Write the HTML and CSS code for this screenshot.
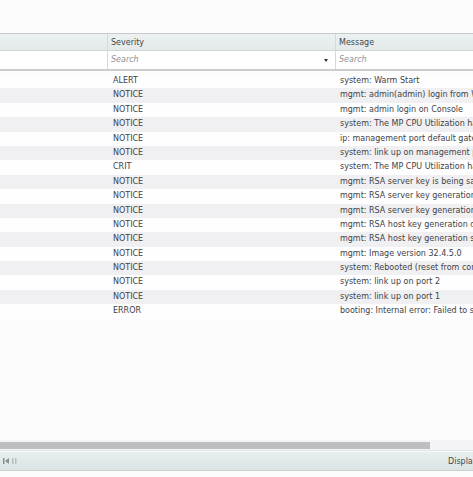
FILE: index.html
```html
<!DOCTYPE html>
<html>
<head>
<meta charset="utf-8">
<link rel="stylesheet" href="styles.css">
</head>
<body>
<div class="page">
  <div class="top"></div>
  <div class="grid">
    <div class="hdr">
      <div class="c c1"></div>
      <div class="c c2">Severity</div>
      <div class="c c3">Message</div>
    </div>
    <div class="flt">
      <div class="c c1"></div>
      <div class="c c2"><span class="ph">Search</span><span class="arrow"></span></div>
      <div class="c c3"><span class="ph">Search</span></div>
    </div>
    <div class="rows">
      <div class="row"><div class="c c1"></div><div class="c c2">ALERT</div><div class="c c3">system: Warm Start</div></div>
      <div class="row"><div class="c c1"></div><div class="c c2">NOTICE</div><div class="c c3">mgmt: admin(admin) login from Web</div></div>
      <div class="row"><div class="c c1"></div><div class="c c2">NOTICE</div><div class="c c3">mgmt: admin login on Console</div></div>
      <div class="row"><div class="c c1"></div><div class="c c2">NOTICE</div><div class="c c3">system: The MP CPU Utilization has</div></div>
      <div class="row"><div class="c c1"></div><div class="c c2">NOTICE</div><div class="c c3">ip: management port default gateway</div></div>
      <div class="row"><div class="c c1"></div><div class="c c2">NOTICE</div><div class="c c3">system: link up on management port</div></div>
      <div class="row"><div class="c c1"></div><div class="c c2">CRIT</div><div class="c c3">system: The MP CPU Utilization has</div></div>
      <div class="row"><div class="c c1"></div><div class="c c2">NOTICE</div><div class="c c3">mgmt: RSA server key is being saved</div></div>
      <div class="row"><div class="c c1"></div><div class="c c2">NOTICE</div><div class="c c3">mgmt: RSA server key generation</div></div>
      <div class="row"><div class="c c1"></div><div class="c c2">NOTICE</div><div class="c c3">mgmt: RSA server key generation</div></div>
      <div class="row"><div class="c c1"></div><div class="c c2">NOTICE</div><div class="c c3">mgmt: RSA host key generation done</div></div>
      <div class="row"><div class="c c1"></div><div class="c c2">NOTICE</div><div class="c c3">mgmt: RSA host key generation started</div></div>
      <div class="row"><div class="c c1"></div><div class="c c2">NOTICE</div><div class="c c3">mgmt: Image version 32.4.5.0</div></div>
      <div class="row"><div class="c c1"></div><div class="c c2">NOTICE</div><div class="c c3">system: Rebooted (reset from console)</div></div>
      <div class="row"><div class="c c1"></div><div class="c c2">NOTICE</div><div class="c c3">system: link up on port 2</div></div>
      <div class="row"><div class="c c1"></div><div class="c c2">NOTICE</div><div class="c c3">system: link up on port 1</div></div>
      <div class="row"><div class="c c1"></div><div class="c c2">ERROR</div><div class="c c3">booting: Internal error: Failed to start</div></div>
    </div>
  </div>
  <div class="scroll"><div class="thumb"></div></div>
  <div class="footer">
    <div class="pager">
      <svg width="16" height="10" viewBox="0 0 16 10"><rect x="1" y="2" width="1.5" height="6" fill="#8a8f94"/><path d="M3 5 L7 2 L7 8 Z" fill="#8a8f94"/><rect x="10" y="2" width="1.5" height="6" fill="#b9bec2"/><rect x="13" y="2" width="1.5" height="6" fill="#b9bec2"/></svg>
    </div>
    <div class="disp">Displaying 1 - 17 of 17</div>
  </div>
</div>
</body>
</html>
```
FILE: styles.css
```css
html, body {
  margin: 0;
  padding: 0;
}
body {
  background: #fdfcfd;
  font-family: "DejaVu Sans", Verdana, sans-serif;
  font-size: 8px;
  color: #3f4248;
  overflow: hidden;
}
.page {
  width: 473px;
  height: 477px;
  display: flex;
  flex-direction: column;
  overflow: hidden;
}
.top {
  height: 33px;
  flex: none;
}
.grid {
  flex: 1;
  display: flex;
  flex-direction: column;
  overflow: hidden;
}
.hdr, .flt, .row {
  display: grid;
  grid-template-columns: 107px 228px 1fr;
  white-space: nowrap;
}
.hdr {
  height: 16px;
  border-top: 1px solid #c9cacb;
  border-bottom: 1px solid #d3d5d6;
  background: linear-gradient(#ecf2f2, #e3eaea);
  color: #43464c;
}
.hdr .c {
  line-height: 17px;
  padding-left: 3px;
}
.hdr .c2, .hdr .c3,
.flt .c2, .flt .c3 {
  border-left: 1px solid #d6d9da;
}
.flt {
  height: 18px;
  background: #ffffff;
  border-bottom: 2px solid #cdcdcf;
}
.flt .c {
  line-height: 18px;
  padding-left: 3px;
  position: relative;
}
.ph {
  font-style: italic;
  color: #8e9196;
}
.arrow {
  position: absolute;
  left: 216px;
  top: 8px;
  width: 0;
  height: 0;
  border-left: 2.5px solid transparent;
  border-right: 2.5px solid transparent;
  border-top: 3px solid #333;
}
.rows {
  padding-top: 3px;
}
.row {
  height: 14.4px;
  line-height: 14.4px;
  background: #fefefe;
}
.row:nth-child(even) {
  background: #f0f0f2;
}
.c {
  overflow: hidden;
}
.row .c2 {
  padding-left: 6px;
}
.row .c3 {
  padding-left: 5px;
}
.scroll {
  flex: none;
  height: 10px;
  background: #f4f3f5;
  border-bottom: 1px solid #e4e6e6;
  display: flex;
  align-items: center;
}
.thumb {
  width: 430px;
  height: 7px;
  background: #bebdc1;
}
.footer {
  flex: none;
  height: 18px;
  margin-bottom: 6px;
  background: linear-gradient(#e6eeee, #dbe5e5);
  border-top: 1px solid #f6f9f9;
  border-bottom: 1px solid #c8d0cc;
  display: flex;
  align-items: center;
  justify-content: space-between;
  white-space: nowrap;
  overflow: hidden;
}
.pager {
  padding-left: 2px;
  display: flex;
  align-items: center;
}
.disp {
  margin-left: auto;
  width: 25px;
  color: #454950;
  overflow: visible;
}
```
